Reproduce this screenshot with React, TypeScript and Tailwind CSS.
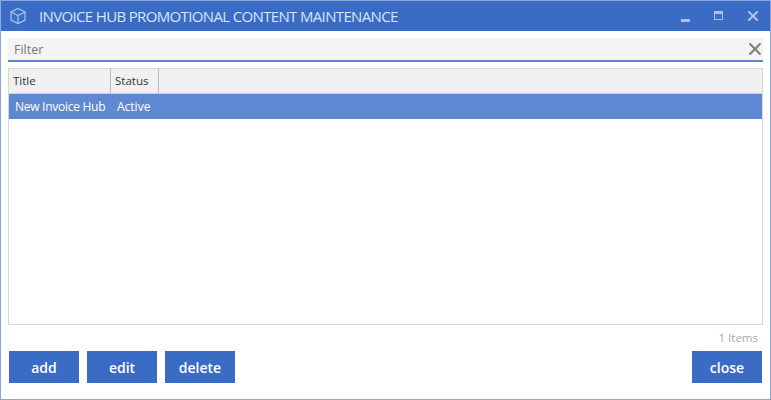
export default function App() {
  const font = { fontFamily: '"Open Sans", "Noto Sans", sans-serif' };
  return (
    <div style={font} className="w-[771px] h-[400px] bg-white border border-[#8ba5de] flex flex-col overflow-hidden">
      <div className="h-[30px] bg-[#3a6cc6] flex items-center shrink-0">
        <svg width="20" height="20" viewBox="0 0 20 20" className="ml-[7px]" fill="none" stroke="#a9c0e8" strokeWidth="1.3">
          <path d="M10 2.5 17 6v8l-7 3.5L3 14V6z" />
          <path d="M3 6l7 3.5L17 6M10 9.5v8" />
        </svg>
        <span className="ml-[11px] text-[15px] tracking-[-0.65px] text-[#d5e6fb] whitespace-nowrap">INVOICE HUB PROMOTIONAL CONTENT MAINTENANCE</span>
        <div className="ml-auto flex items-center">
          <div className="w-[9px] h-[3px] bg-[#a9c0e8] mt-[8px] mr-[24px]" />
          <div className="w-[9px] h-[9px] border border-[#a9c0e8] border-t-[3px] mr-[25px] mb-[2px]" />
          <svg width="10" height="10" viewBox="0 0 10 10" className="mr-[12px]" stroke="#a9c0e8" strokeWidth="2">
            <path d="M0 0l10 10M10 0 0 10" />
          </svg>
        </div>
      </div>
      <div className="mx-[7px] mt-[7px] h-[24px] bg-[#f4f4f4] border-b-2 border-[#5b86cf] flex items-center shrink-0">
        <span className="ml-[6px] mt-[2px] text-[12.5px] text-[#777777]">Filter</span>
        <svg width="12" height="12" viewBox="0 0 12 12" className="ml-auto mr-[2px]" stroke="#7f7f7f" strokeWidth="2.2">
          <path d="M0.5 0.5l11 11M11.5 0.5l-11 11" />
        </svg>
      </div>
      <div className="mx-[7px] mt-[6px] h-[257px] border border-[#d6d6d6] shrink-0 flex flex-col">
        <div className="h-[25px] bg-[#f0f0f0] flex text-[11.5px] text-[#333333] border-b border-[#d0d0d0] shrink-0">
          <div className="w-[102px] border-r border-[#bdbdbd] pl-[4px] flex items-center">Title</div>
          <div className="w-[48px] border-r border-[#bdbdbd] pl-[4px] flex items-center">Status</div>
        </div>
        <div className="h-[25px] bg-[#5f88d2] flex text-[12px] text-white shrink-0">
          <div className="w-[102px] pl-[6px] pt-[1px] flex items-center whitespace-nowrap tracking-[-0.27px]">New Invoice Hub</div>
          <div className="w-[48px] pl-[6px] pt-[1px] flex items-center">Active</div>
        </div>
      </div>
      <div className="mx-[7px] mt-[5px] text-right pr-[5px] text-[11.5px] leading-[16px] text-[#a8a8a8] shrink-0">1 Items</div>
      <div className="mx-[8px] mt-[5px] flex gap-[8px] shrink-0 text-[14px] font-semibold text-white">
        <div className="w-[70px] h-[32px] bg-[#3a6cc6] flex items-center justify-center">add</div>
        <div className="w-[70px] h-[32px] bg-[#3a6cc6] flex items-center justify-center">edit</div>
        <div className="w-[70px] h-[32px] bg-[#3a6cc6] flex items-center justify-center">delete</div>
        <div className="w-[70px] h-[32px] bg-[#3a6cc6] flex items-center justify-center ml-auto">close</div>
      </div>
    </div>
  );
}
